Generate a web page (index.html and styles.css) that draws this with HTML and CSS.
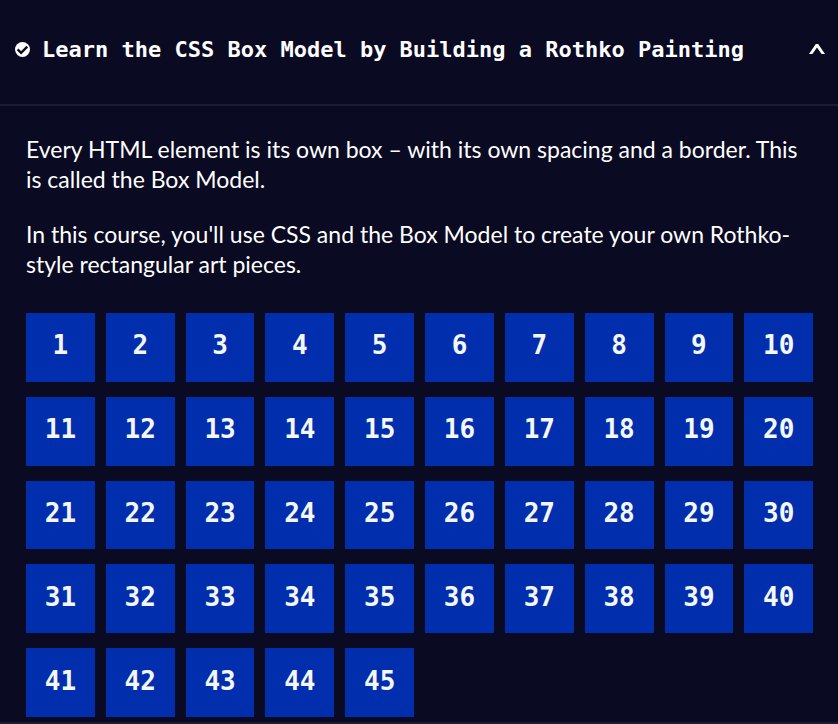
FILE: index.html
```html
<!DOCTYPE html>
<html lang="en">
<head>
<meta charset="utf-8">
<meta name="viewport" content="width=device-width, initial-scale=1">
<title>CSS Box Model</title>
<link rel="stylesheet" href="styles.css">
</head>
<body>
<main class="block">
  <h1 class="heading">
    <button class="toggle" type="button" aria-expanded="true" aria-controls="panel">
      <svg class="check" viewBox="0 0 16 16" aria-hidden="true"><circle cx="8" cy="8" r="8"/><path d="M2.8 7.8l3.7 3.7 6.6-6.6"/></svg>
      <span class="title">Learn the CSS Box Model by Building a Rothko Painting</span>
      <svg class="chevron" viewBox="0 0 16 12" aria-hidden="true"><path d="M0 11L6.8 1h2.4L16 11h-3.4L8 4.4 3.4 11z"/></svg>
    </button>
  </h1>
  <section class="panel" id="panel">
    <p>Every HTML element is its own box – with its own spacing and a border. This is called the Box Model.</p>
    <p>In this course, you'll use CSS and the Box Model to create your own Rothko-style rectangular art pieces.</p>
    <nav class="steps" id="steps" aria-label="Steps"></nav>
  </section>
</main>
<script src="script.js"></script>
</body>
</html>
```
FILE: styles.css
```css
* {
  box-sizing: border-box;
}

body {
  margin: 0;
  background: #0a0a23;
  color: #fff;
  font-family: Lato, sans-serif;
}

.block {
  border-bottom: 2px solid #1b1b32;
}

.heading {
  margin: 0;
  border-bottom: 2px solid #1b1b32;
}

.toggle {
  display: flex;
  align-items: center;
  width: 100%;
  padding: 33px 13px 39px 15px;
  border: 0;
  background: none;
  color: inherit;
  font: 700 22px/30px "DejaVu Sans Mono", monospace;
  text-align: left;
  cursor: pointer;
}

.check {
  flex: none;
  width: 15px;
  height: 15px;
  margin-right: 12px;
  fill: #fff;
}

.check path {
  fill: none;
  stroke: #0a0a23;
  stroke-width: 2.5;
}

.title {
  flex: 1;
  padding-top: 2px;
}

.chevron {
  flex: none;
  width: 16px;
  height: 12px;
  fill: #fff;
}

.panel {
  padding: 28px 25px 5px 26px;
}

.panel p {
  margin: 0 0 25px;
  font-size: 23px;
  line-height: 30px;
}

.steps {
  display: grid;
  grid-template-columns: repeat(10, 1fr);
  gap: 15px 11px;
  margin-top: 34px;
}

.steps a {
  display: flex;
  align-items: center;
  justify-content: center;
  aspect-ratio: 1;
  padding-bottom: 4px;
  background: #002ead;
  color: #f5f6f7;
  font: 700 26px/30px "DejaVu Sans Mono", monospace;
  text-decoration: none;
}
```
FILE: script.js
```js
const steps = document.getElementById("steps");
for (let n = 1; n <= 45; n++) {
  const link = document.createElement("a");
  link.href = "#step-" + n;
  link.textContent = n;
  steps.append(link);
}
```
